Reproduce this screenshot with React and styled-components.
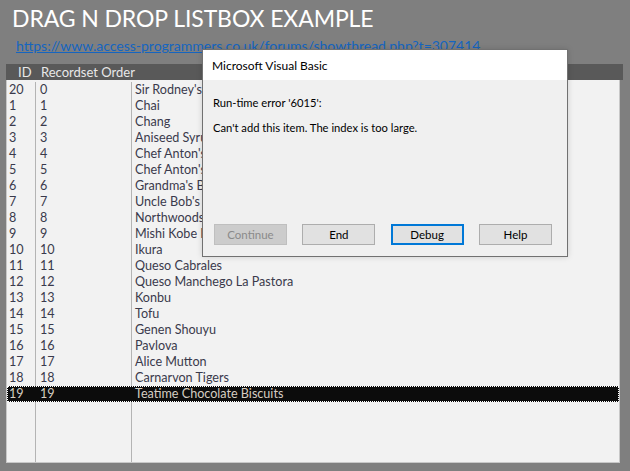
import React from "react";
import styled, { createGlobalStyle } from "styled-components";

const GlobalStyle = createGlobalStyle`
  html, body {
    margin: 0;
    padding: 0;
    background: #7f7f7f;
  }
`;

const Page = styled.div`
  position: relative;
  width: 630px;
  height: 471px;
  box-sizing: border-box;
  padding: 0 7px 8px 6px;
  display: flex;
  flex-direction: column;
  background: #7f7f7f;
  font-family: Lato, "Liberation Sans", sans-serif;
  overflow: hidden;
`;

const Title = styled.h1`
  margin: 3px 0 0 6px;
  font-size: 23px;
  font-weight: 400;
  line-height: 30px;
  color: #ffffff;
  letter-spacing: -0.1px;
`;

const Link = styled.a`
  margin: 4px 0 0 10px;
  font-size: 14px;
  line-height: 17px;
  color: #1565c0;
  text-decoration: underline;
`;

const ListBox = styled.div`
  margin-top: 10px;
  flex: 1;
  display: flex;
  flex-direction: column;
`;

const HeaderRow = styled.div`
  display: grid;
  grid-template-columns: 30px 96px 1fr;
  height: 16px;
  background: #595959;
  color: #e8e8e8;
  font-size: 13px;
  line-height: 16px;
`;

const HeaderCell = styled.div`
  padding-left: ${(p) => p.$pad || 4}px;
  white-space: nowrap;
`;

const Body = styled.div`
  flex: 1;
  display: flex;
  flex-direction: column;
  margin-right: 3px;
  padding-top: 2px;
  background: #f2f2f2;
  border-left: 1px solid #c8c8c8;
  border-right: 1px solid #c8c8c8;
  border-bottom: 1px solid #c8c8c8;
`;

const Row = styled.div`
  display: grid;
  grid-template-columns: 29px 96px 1fr;
  height: 16px;
  font-size: 12.6px;
  line-height: 16px;
  color: ${(p) => (p.$selected ? "#d6cec2" : "#3a3a4c")};
  background: ${(p) => (p.$selected ? "#0c0c0c" : "transparent")};
  outline: ${(p) => (p.$selected ? "1px dotted #ffffff" : "none")};
  outline-offset: -1px;
`;

const Cell = styled.div`
  padding-left: ${(p) => p.$pad || 3}px;
  white-space: nowrap;
  overflow: hidden;
  border-right: ${(p) => (p.$line ? "1px solid #b4b4b4" : "none")};
`;

const Filler = styled.div`
  flex: 1;
  display: grid;
  grid-template-columns: 29px 96px 1fr;
`;

const Dialog = styled.div`
  position: absolute;
  left: 202px;
  top: 49px;
  width: 366px;
  height: 208px;
  box-sizing: border-box;
  border: 1px solid #717171;
  background: #f0f0f0;
  display: flex;
  flex-direction: column;
  font-family: Lato, "Liberation Sans", sans-serif;
  font-size: 11.2px;
  color: #000;
  box-shadow: 0 0 6px rgba(0, 0, 0, 0.15);
`;

const DialogTitle = styled.div`
  height: 30px;
  background: #ffffff;
  padding-left: 9px;
  display: flex;
  align-items: center;
  font-size: 12px;
`;

const DialogBody = styled.div`
  flex: 1;
  display: flex;
  flex-direction: column;
  padding: 16px 11px 0 10px;
`;

const Message = styled.div`
  line-height: 14px;
  margin-bottom: ${(p) => p.$gap || 0}px;
`;

const ButtonBar = styled.div`
  margin-top: auto;
  margin-bottom: 11px;
  margin-left: 1px;
  width: 338px;
  display: flex;
  justify-content: space-between;
`;

const Button = styled.button`
  width: 73px;
  height: 21px;
  box-sizing: border-box;
  font-family: Lato, "Liberation Sans", sans-serif;
  font-size: 11.5px;
  padding: 0;
  background: ${(p) => (p.disabled ? "#cccccc" : "#e1e1e1")};
  color: ${(p) => (p.disabled ? "#8a8a8a" : "#000000")};
  border: ${(p) => (p.$default ? "2px solid #0078d7" : p.disabled ? "1px solid #bfbfbf" : "1px solid #adadad")};
`;

const items = [
  [20, 0, "Sir Rodney's Scones"],
  [1, 1, "Chai"],
  [2, 2, "Chang"],
  [3, 3, "Aniseed Syrup"],
  [4, 4, "Chef Anton's Cajun Seasoning"],
  [5, 5, "Chef Anton's Gumbo Mix"],
  [6, 6, "Grandma's Boysenberry Spread"],
  [7, 7, "Uncle Bob's Organic Dried Pears"],
  [8, 8, "Northwoods Cranberry Sauce"],
  [9, 9, "Mishi Kobe Niku"],
  [10, 10, "Ikura"],
  [11, 11, "Queso Cabrales"],
  [12, 12, "Queso Manchego La Pastora"],
  [13, 13, "Konbu"],
  [14, 14, "Tofu"],
  [15, 15, "Genen Shouyu"],
  [16, 16, "Pavlova"],
  [17, 17, "Alice Mutton"],
  [18, 18, "Carnarvon Tigers"],
  [19, 19, "Teatime Chocolate Biscuits"],
];

const App = () => {
  const selected = items.length - 1;

  return (
    <>
      <GlobalStyle />
      <Page>
        <Title>DRAG N DROP LISTBOX EXAMPLE</Title>
        <Link href="#">https://www.access-programmers.co.uk/forums/showthread.php?t=307414</Link>
        <ListBox>
          <HeaderRow>
            <HeaderCell $pad={12}>ID</HeaderCell>
            <HeaderCell $pad={5}>Recordset Order</HeaderCell>
            <HeaderCell />
          </HeaderRow>
          <Body>
            {items.map(([id, order, name], i) => (
              <Row key={i} $selected={i === selected}>
                <Cell $line={i !== selected} $pad={2}>{id}</Cell>
                <Cell $line={i !== selected} $pad={4}>{order}</Cell>
                <Cell $pad={3}>{name}</Cell>
              </Row>
            ))}
            <Filler>
              <Cell $line />
              <Cell $line />
              <Cell />
            </Filler>
          </Body>
        </ListBox>

        <Dialog>
          <DialogTitle>Microsoft Visual Basic</DialogTitle>
          <DialogBody>
            <Message $gap={11}>Run-time error '6015':</Message>
            <Message>Can't add this item. The index is too large.</Message>
            <ButtonBar>
              <Button disabled>Continue</Button>
              <Button>End</Button>
              <Button $default>Debug</Button>
              <Button>Help</Button>
            </ButtonBar>
          </DialogBody>
        </Dialog>
      </Page>
    </>
  );
};

export default App;
